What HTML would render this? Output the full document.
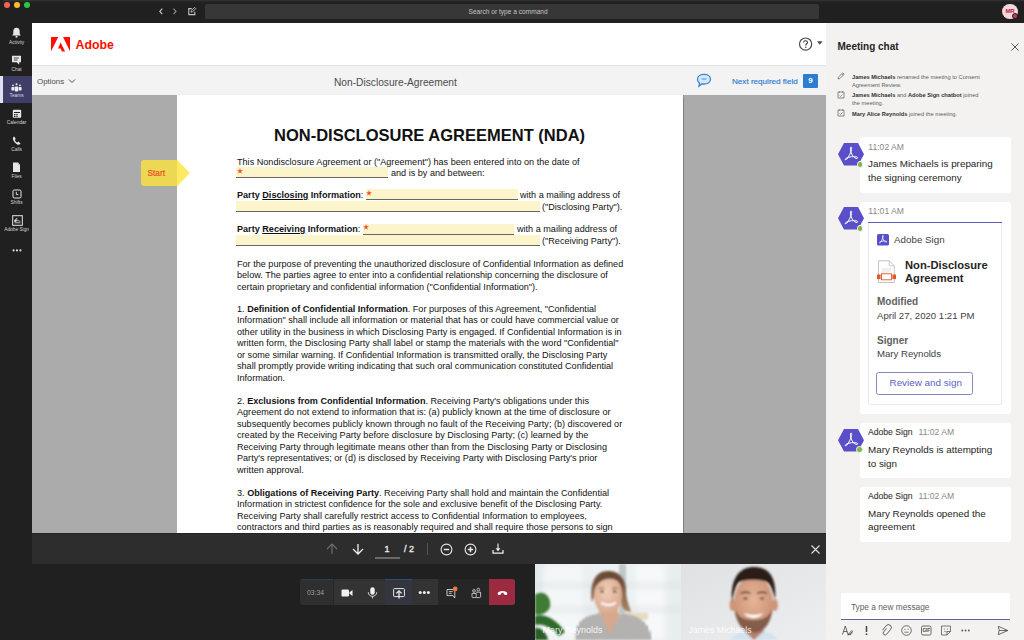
<!DOCTYPE html>
<html><head><meta charset="utf-8">
<style>
*{box-sizing:border-box}
html,body{margin:0;padding:0}
body{width:1024px;height:640px;overflow:hidden;position:relative;background:#202020;font-family:"Liberation Sans",sans-serif}
.a{position:absolute}
.nw{white-space:nowrap}
svg{position:absolute;overflow:visible}
/* rail */
.ri{position:absolute;left:0;width:32px;text-align:center}
.rl{position:absolute;left:0.6px;width:32px;text-align:center;font-size:4.8px;color:#d4d4d4;line-height:5px;white-space:nowrap}
/* doc */
.dl{position:absolute;left:237px;font-size:9.1px;line-height:11px;color:#111;white-space:nowrap;margin-top:1.1px}
.fld{position:absolute;background:#fcf4cb;border-bottom:1px solid #666}
.star{position:absolute;color:#e8412a;font-size:10px;line-height:10px;font-weight:bold}
/* chat */
.card{position:absolute;left:860px;width:151px;background:#fff;border-radius:3px}
.hex{position:absolute;width:26px;height:24px}
.ct{position:absolute;left:868px;font-size:9.85px;color:#252423;white-space:nowrap;line-height:13px}
.tm{position:absolute;font-size:8.6px;color:#8a8886;white-space:nowrap;line-height:10px}
.sys{position:absolute;left:852px;font-size:5.7px;color:#605e5c;line-height:7.7px;white-space:nowrap}
.sys b{color:#323130}
</style></head>
<body>

<!-- ===== TITLE BAR ===== -->
<div class="a" style="left:0;top:0;width:1024px;height:23px;background:#202020"></div>
<div class="a" style="left:3px;top:0;width:1021px;height:1px;background:#303030"></div><div class="a" style="left:3px;top:1px;width:1021px;height:1px;background:#262626"></div>
<div class="a" style="left:4px;top:2px;width:6px;height:6px;border-radius:50%;background:#fe5f57"></div>
<div class="a" style="left:14px;top:2px;width:6px;height:6px;border-radius:50%;background:#febc2e"></div>
<div class="a" style="left:23.5px;top:2px;width:6px;height:6px;border-radius:50%;background:#28c840"></div>
<!-- nav -->
<svg style="left:158px;top:7px" width="6" height="9" viewBox="0 0 6 9"><path d="M4.3 1.6 L1.8 4.4 L4.3 7.2" fill="none" stroke="#c4c4c4" stroke-width="1.15"/></svg>
<svg style="left:172px;top:7px" width="6" height="9" viewBox="0 0 6 9"><path d="M1.5 1.6 L4 4.4 L1.5 7.2" fill="none" stroke="#8e8e8e" stroke-width="1.15"/></svg>
<svg style="left:187px;top:6px" width="10" height="10" viewBox="0 0 10 10"><path d="M4.8 2.6 H1.8 V8.6 H7.8 V5.8" fill="none" stroke="#c4c4c4" stroke-width="1.1"/><path d="M4 6.2 L4.4 4.6 L7.6 1.4 L8.8 2.6 L5.6 5.8 Z" fill="none" stroke="#c4c4c4" stroke-width="0.9"/></svg>
<div class="a" style="left:205px;top:4px;width:614px;height:15px;background:#373737;border-radius:2px"></div>
<div class="a nw" style="left:468.5px;top:7px;font-size:6.6px;line-height:9px;color:#c4c4c4">Search or type a command</div>
<!-- avatar -->
<div class="a" style="left:1002px;top:3.5px;width:15.5px;height:15.5px;border-radius:50%;background:#f4d7dd"></div>
<div class="a nw" style="left:1003px;top:7px;width:14px;text-align:center;font-size:6px;line-height:8px;font-weight:bold;color:#b4243f;letter-spacing:-0.2px">MR</div>
<div class="a" style="left:1011.5px;top:12.6px;width:6.8px;height:6.8px;border-radius:50%;background:#d13650;border:1px solid #202020"></div>

<!-- ===== LEFT RAIL ===== -->
<div class="a" style="left:0;top:23px;width:32px;height:617px;background:#202020"></div>
<div class="a" style="left:0;top:76px;width:32px;height:27px;background:#3e3e67"></div>
<div class="a" style="left:0;top:76px;width:3px;height:27px;background:#e0e0f4"></div>
<!-- activity bell -->
<svg style="left:11px;top:27px" width="11" height="11" viewBox="0 0 11 11"><path d="M5.5 0.8 C3.4 0.8 2.3 2.4 2.3 4.3 V6.8 L1.2 8.6 H9.8 L8.7 6.8 V4.3 C8.7 2.4 7.6 0.8 5.5 0.8 Z" fill="#e6e6e6"/><rect x="4.6" y="8.8" width="1.8" height="1.8" fill="#e6e6e6"/></svg>
<div class="rl" style="top:39.5px">Activity</div>
<!-- chat -->
<svg style="left:11px;top:55px" width="11" height="11" viewBox="0 0 11 11"><path d="M1 0.8 H10 V7.2 H8.2 V9.8 L5.6 7.2 H1 Z" fill="#e6e6e6"/><path d="M2.8 3 H7.8 M2.8 5 H6.5" stroke="#202020" stroke-width="0.8"/></svg>
<div class="rl" style="top:66.5px">Chat</div>
<!-- teams -->
<svg style="left:11px;top:82.5px" width="11" height="10" viewBox="0 0 11 10"><circle cx="5.5" cy="1.3" r="1" fill="#f0f0f0"/><circle cx="2" cy="2.3" r="0.9" fill="#f0f0f0"/><circle cx="9" cy="2.3" r="0.9" fill="#f0f0f0"/><rect x="3.7" y="3.4" width="3.6" height="5" rx="0.8" fill="#f0f0f0"/><rect x="0.4" y="4" width="2.9" height="3.5" rx="0.8" fill="#f0f0f0"/><rect x="7.7" y="4" width="2.9" height="3.5" rx="0.8" fill="#f0f0f0"/></svg>
<div class="rl" style="top:93.2px;color:#d6d6e6">Teams</div>
<!-- calendar -->
<svg style="left:11.5px;top:109px" width="10" height="10" viewBox="0 0 10 10"><rect x="0.8" y="0.8" width="8.4" height="8" rx="1" fill="#e6e6e6"/><rect x="2" y="3" width="6" height="1" fill="#202020"/><rect x="2" y="5" width="1.4" height="1.2" fill="#202020"/><rect x="4.3" y="5" width="1.4" height="1.2" fill="#202020"/><rect x="2" y="6.8" width="1.4" height="1.2" fill="#202020"/><rect x="4.3" y="6.8" width="1.4" height="1.2" fill="#202020"/></svg>
<div class="rl" style="top:120px">Calendar</div>
<!-- calls -->
<svg style="left:12px;top:135.5px" width="9" height="9" viewBox="0 0 9 9"><path d="M1.2 1.2 C1.6 0.7 2.2 0.6 2.6 1 L3.5 2.4 C3.7 2.8 3.6 3.2 3.3 3.5 L2.9 3.9 C3.4 5.2 4.1 6 5.3 6.6 L5.8 6.1 C6.1 5.8 6.5 5.8 6.9 6 L8.1 6.9 C8.5 7.3 8.4 7.9 7.9 8.3 C6.8 9.2 5 8.7 3.3 7 C1.3 5 0.4 2.6 1.2 1.2 Z" fill="#e6e6e6"/></svg>
<div class="rl" style="top:146.7px">Calls</div>
<!-- files -->
<svg style="left:12px;top:162px" width="9" height="11" viewBox="0 0 9 11"><path d="M1 0.5 H5.8 L8 2.8 V10 H1 Z" fill="#e6e6e6"/><path d="M5.8 0.5 V2.8 H8" fill="#bdbdbd"/></svg>
<div class="rl" style="top:173.5px">Files</div>
<!-- shifts -->
<svg style="left:12px;top:188.5px" width="10" height="10" viewBox="0 0 10 10"><rect x="1" y="1" width="8" height="8" rx="1.2" fill="none" stroke="#e6e6e6" stroke-width="1"/><path d="M4.3 2.8 V5.6 H6.4" fill="none" stroke="#e6e6e6" stroke-width="0.9"/></svg>
<div class="rl" style="top:200px">Shifts</div>
<!-- adobe sign -->
<svg style="left:11.5px;top:214.5px" width="11" height="11" viewBox="0 0 11 11"><rect x="0.7" y="0.7" width="9.6" height="9.6" fill="none" stroke="#e6e6e6" stroke-width="1"/><path d="M2.6 7.8 H8.4" stroke="#e6e6e6" stroke-width="0.8"/><path d="M3 6.6 C3.4 4.4 4.4 3.2 4.8 3.2 C5.2 3.2 4.4 5.6 4.8 6 C5.2 6.4 6 5 6.6 5.8 C7 6.3 7.8 6.2 8.3 6" fill="none" stroke="#e6e6e6" stroke-width="0.8"/><rect x="2.4" y="4.8" width="2" height="2" fill="#e6e6e6"/></svg>
<div class="rl" style="top:226.8px">Adobe Sign</div>
<!-- more -->
<svg style="left:12px;top:248px" width="10" height="5" viewBox="0 0 10 5"><circle cx="1.6" cy="2.4" r="1.1" fill="#d8d8d8"/><circle cx="5" cy="2.4" r="1.1" fill="#d8d8d8"/><circle cx="8.4" cy="2.4" r="1.1" fill="#d8d8d8"/></svg>

<!-- ===== MAIN ===== -->
<!-- adobe header -->
<div class="a" style="left:32px;top:23px;width:794px;height:42px;background:#fff"></div>
<div class="a" style="left:32px;top:64.5px;width:794px;height:1px;background:#e3e3e3"></div>
<svg style="left:51px;top:37px" width="19" height="14.5" viewBox="0 0 19 14.5">
  <path d="M0 0 H7.3 L0 14.3 Z" fill="#fa0f00"/>
  <path d="M12 0 H19 V14.3 Z" fill="#fa0f00"/>
  <path d="M9.6 5.6 L14.1 14.5 H10.9 L9.6 11.6 H7 Z" fill="#fa0f00"/>
</svg>
<div class="a nw" style="left:75.5px;top:36.7px;font-size:12.3px;line-height:16px;font-weight:bold;color:#fa0f00">Adobe</div>
<!-- help -->
<svg style="left:798px;top:36px" width="26" height="16" viewBox="0 0 26 16"><circle cx="7.6" cy="8.1" r="6.1" fill="none" stroke="#4a4a4a" stroke-width="1.2"/><path d="M5.6 6.6 C5.6 5.3 6.4 4.7 7.5 4.7 C8.7 4.7 9.5 5.4 9.5 6.4 C9.5 7.6 8 7.8 7.8 9.1 V9.6" fill="none" stroke="#3a3a3a" stroke-width="1.1"/><circle cx="7.8" cy="11.3" r="0.7" fill="#3a3a3a"/><path d="M19 5.2 H24.6 L21.8 8.8 Z" fill="#4a4a4a"/></svg>

<!-- options bar -->
<div class="a" style="left:32px;top:65.5px;width:794px;height:29.5px;background:#f3f3f3"></div>
<div class="a nw" style="left:37px;top:76.7px;font-size:7.9px;line-height:10px;color:#4b4b4b">Options</div>
<svg style="left:68px;top:78px" width="8" height="6" viewBox="0 0 8 6"><path d="M1 1.5 L4 4.5 L7 1.5" fill="none" stroke="#4b4b4b" stroke-width="1"/></svg>
<div class="a nw" style="left:334px;top:75.6px;font-size:10.2px;line-height:13px;color:#4b4b4b">Non-Disclosure-Agreement</div>
<svg style="left:696px;top:73px" width="16" height="15" viewBox="0 0 16 15"><path d="M8 1.3 C11.8 1.3 14.5 3.3 14.5 6.2 C14.5 9 11.8 11 8 11 C7.3 11 6.7 10.9 6.1 10.8 L3 13.2 L3.6 10.2 C2.2 9.3 1.5 7.9 1.5 6.2 C1.5 3.3 4.2 1.3 8 1.3 Z" fill="#d7e7f8" stroke="#3b86d4" stroke-width="1.3"/><path d="M5.5 6 H10.5" stroke="#3b86d4" stroke-width="0.9"/></svg>
<div class="a nw" style="left:732px;top:75.7px;font-size:8.1px;line-height:11px;color:#2a78cc;-webkit-text-stroke:0.15px #2a78cc">Next required field</div>
<div class="a" style="left:803px;top:74px;width:15px;height:14px;background:#2d7dd2;border-radius:1px;color:#fff;font-size:8px;line-height:14px;text-align:center;font-weight:bold">9</div>

<!-- doc viewport -->
<div class="a" style="left:32px;top:95px;width:794px;height:438px;background:#ababab"></div>
<div class="a" style="left:177px;top:95px;width:506px;height:438px;background:#fff;box-shadow:0.5px 0 1px rgba(0,0,0,0.25)"></div>

<!-- doc content -->
<div class="a" style="left:0;top:95px;width:826px;height:438px;overflow:hidden"><div class="a" style="left:0;top:-95px;width:826px;height:640px">

<div class="a nw" style="left:274px;top:124.7px;font-size:16.5px;line-height:20px;font-weight:bold;color:#111">NON-DISCLOSURE AGREEMENT (NDA)</div>
<div class="dl" style="top:155.7px">This Nondisclosure Agreement or ("Agreement") has been entered into on the date of</div>
<div class="fld" style="left:236px;top:167px;width:152px;height:11px"></div>
<div class="dl" style="left:391px;top:166.5px">and is by and between:</div>
<div class="dl" style="top:189.1px"><b>Party <u>Disclosing</u> Information</b>:</div>
<div class="fld" style="left:366px;top:189.3px;width:152px;height:11px"></div>
<div class="dl" style="left:520px;top:189.1px">with a mailing address of</div>
<div class="fld" style="left:236px;top:200.5px;width:304px;height:11.5px"></div>
<div class="dl" style="left:542px;top:200.5px">("Disclosing Party").</div>
<div class="dl" style="top:223.1px"><b>Party <u>Receiving</u> Information</b>:</div>
<div class="fld" style="left:363px;top:223.5px;width:151px;height:11px"></div>
<div class="dl" style="left:517px;top:223.1px">with a mailing address of</div>
<div class="fld" style="left:236px;top:234.5px;width:304px;height:11.5px"></div>
<div class="dl" style="left:542px;top:234.6px">("Receiving Party").</div>
<svg style="left:237px;top:168px" width="6" height="6" viewBox="0 0 10 10"><path d="M5 0 L6.2 3.6 L10 3.6 L6.9 5.8 L8.1 9.5 L5 7.2 L1.9 9.5 L3.1 5.8 L0 3.6 L3.8 3.6 Z" fill="#f04e23"/></svg>
<svg style="left:366px;top:189.5px" width="6" height="6" viewBox="0 0 10 10"><path d="M5 0 L6.2 3.6 L10 3.6 L6.9 5.8 L8.1 9.5 L5 7.2 L1.9 9.5 L3.1 5.8 L0 3.6 L3.8 3.6 Z" fill="#f04e23"/></svg>
<svg style="left:363px;top:223.5px" width="6" height="6" viewBox="0 0 10 10"><path d="M5 0 L6.2 3.6 L10 3.6 L6.9 5.8 L8.1 9.5 L5 7.2 L1.9 9.5 L3.1 5.8 L0 3.6 L3.8 3.6 Z" fill="#f04e23"/></svg>
<div class="dl" style="top:257.5px">For the purpose of preventing the unauthorized disclosure of Confidential Information as defined</div>
<div class="dl" style="top:269.0px">below. The parties agree to enter into a confidential relationship concerning the disclosure of</div>
<div class="dl" style="top:280.5px">certain proprietary and confidential information ("Confidential Information").</div>
<div class="dl" style="top:302.9px">1. <b>Definition of Confidential Information</b>. For purposes of this Agreement, "Confidential</div>
<div class="dl" style="top:314.4px">Information" shall include all information or material that has or could have commercial value or</div>
<div class="dl" style="top:325.9px">other utility in the business in which Disclosing Party is engaged. If Confidential Information is in</div>
<div class="dl" style="top:337.4px">written form, the Disclosing Party shall label or stamp the materials with the word "Confidential"</div>
<div class="dl" style="top:348.9px">or some similar warning. If Confidential Information is transmitted orally, the Disclosing Party</div>
<div class="dl" style="top:360.4px">shall promptly provide writing indicating that such oral communication constituted Confidential</div>
<div class="dl" style="top:371.9px">Information.</div>
<div class="dl" style="top:394.9px">2. <b>Exclusions from Confidential Information</b>. Receiving Party's obligations under this</div>
<div class="dl" style="top:406.4px">Agreement do not extend to information that is: (a) publicly known at the time of disclosure or</div>
<div class="dl" style="top:417.9px">subsequently becomes publicly known through no fault of the Receiving Party; (b) discovered or</div>
<div class="dl" style="top:429.4px">created by the Receiving Party before disclosure by Disclosing Party; (c) learned by the</div>
<div class="dl" style="top:440.9px">Receiving Party through legitimate means other than from the Disclosing Party or Disclosing</div>
<div class="dl" style="top:452.4px">Party's representatives; or (d) is disclosed by Receiving Party with Disclosing Party's prior</div>
<div class="dl" style="top:463.9px">written approval.</div>
<div class="dl" style="top:486.6px">3. <b>Obligations of Receiving Party</b>. Receiving Party shall hold and maintain the Confidential</div>
<div class="dl" style="top:498.1px">Information in strictest confidence for the sole and exclusive benefit of the Disclosing Party.</div>
<div class="dl" style="top:509.6px">Receiving Party shall carefully restrict access to Confidential Information to employees,</div>
<div class="dl" style="top:521.1px">contractors and third parties as is reasonably required and shall require those persons to sign</div>
</div></div>
<!-- start tag -->
<svg style="left:140.5px;top:159.5px" width="50" height="27" viewBox="0 0 50 27"><path d="M3 0 H36.5 L48.8 13 L36.5 26 H3 C1.3 26 0 24.7 0 23 V3 C0 1.3 1.3 0 3 0 Z" fill="#fde33c" fill-opacity="0.8"/></svg>
<div class="a nw" style="left:147.5px;top:168px;font-size:8.3px;line-height:11px;color:#e8502a;-webkit-text-stroke:0.2px #e8502a">Start</div>
<!-- bottom pdf toolbar -->
<div class="a" style="left:32px;top:533px;width:794px;height:31px;background:#2d2d2d"></div>
<div class="a" style="left:32px;top:533px;width:794px;height:1px;background:#242424"></div>
<svg style="left:326px;top:543px" width="12" height="12" viewBox="0 0 12 12"><path d="M6 11 V1.2 M1 6 L6 1 L11 6" fill="none" stroke="#6e6e6e" stroke-width="1.2"/></svg>
<svg style="left:351.5px;top:543px" width="12" height="12" viewBox="0 0 12 12"><path d="M6 1 V10.8 M1 6 L6 11 L11 6" fill="none" stroke="#f0f0f0" stroke-width="1.3"/></svg>
<div class="a nw" style="left:384.6px;top:544px;font-size:9px;line-height:10px;color:#e8e8e8;-webkit-text-stroke:0.35px #e8e8e8">1</div>
<div class="a" style="left:374.5px;top:557px;width:25px;height:1.5px;background:#6a6a6a"></div>
<div class="a nw" style="left:404px;top:544px;font-size:9px;line-height:10px;color:#e8e8e8;-webkit-text-stroke:0.35px #e8e8e8">/ 2</div>
<div class="a" style="left:427px;top:543px;width:1px;height:11.5px;background:#555"></div>
<svg style="left:439.5px;top:542.5px" width="13" height="13" viewBox="0 0 13 13"><circle cx="6.5" cy="6.5" r="5.4" fill="none" stroke="#e8e8e8" stroke-width="1.1"/><path d="M3.8 6.5 H9.2" stroke="#e8e8e8" stroke-width="1.5"/></svg>
<svg style="left:464px;top:542.5px" width="13" height="13" viewBox="0 0 13 13"><circle cx="6.5" cy="6.5" r="5.4" fill="none" stroke="#e8e8e8" stroke-width="1.1"/><path d="M3.8 6.5 H9.2 M6.5 3.8 V9.2" stroke="#e8e8e8" stroke-width="1.5"/></svg>
<svg style="left:492px;top:542.5px" width="12" height="12" viewBox="0 0 12 12"><path d="M6 0.5 V7.5" stroke="#f0f0f0" stroke-width="1.1"/><path d="M3.6 5.2 L6 8.2 L8.4 5.2 Z" fill="#f0f0f0"/><path d="M1 7 V10.2 H11 V7" fill="none" stroke="#f0f0f0" stroke-width="1.2"/></svg>
<svg style="left:810.5px;top:544.5px" width="9" height="9" viewBox="0 0 9 9"><path d="M0.5 0.5 L8.5 8.5 M8.5 0.5 L0.5 8.5" stroke="#e0e0e0" stroke-width="1.1"/></svg>

<!-- call controls -->
<div class="a" style="left:300px;top:579px;width:215px;height:26px;border-radius:3px;overflow:hidden;background:#333">
  <div class="a" style="left:0;top:0;width:33.5px;height:26px;background:#2f2f2f;border-right:1px solid #262626"></div>
  <div class="a" style="left:0;top:0;width:33px;height:1px;background:#22415c"></div>
  <div class="a" style="left:85px;top:0;width:26.5px;height:26px;background:#35353f"></div>
  <div class="a" style="left:85px;top:0;width:26.5px;height:1px;background:#22527e"></div>
  <div class="a" style="left:137.5px;top:0;width:51.5px;height:26px;background:#262626"></div>
  <div class="a" style="left:189px;top:0;width:26px;height:26px;background:#9c2b41"></div>
</div>
<div class="a nw" style="left:307px;top:589px;font-size:6.8px;line-height:8px;color:#9d9d9d">03:34</div>
<svg style="left:340.5px;top:588.5px" width="12" height="8" viewBox="0 0 12 8"><rect x="0.5" y="0.5" width="7.5" height="7" rx="1.3" fill="#f0f0f0"/><path d="M8.5 3.2 L11.5 1 V7 L8.5 4.8 Z" fill="#f0f0f0"/></svg>
<svg style="left:367px;top:586.5px" width="11" height="12" viewBox="0 0 11 12"><rect x="3.3" y="0.3" width="4.4" height="7.4" rx="2.2" fill="#f0f0f0"/><path d="M1.3 5.2 C1.3 7.8 3.2 9.3 5.5 9.3 C7.8 9.3 9.7 7.8 9.7 5.2 M5.5 9.3 V11.5" fill="none" stroke="#e0e0e0" stroke-width="0.9"/></svg>
<svg style="left:392.5px;top:587.5px" width="12" height="11" viewBox="0 0 12 11"><rect x="0.6" y="0.6" width="10.8" height="8" rx="0.8" fill="none" stroke="#e6e6e6" stroke-width="1"/><path d="M6 10.5 V4" stroke="#f0f0f0" stroke-width="1.3"/><path d="M3.4 5.4 L6 2.8 L8.6 5.4" fill="none" stroke="#f0f0f0" stroke-width="1.3"/></svg>
<svg style="left:418px;top:590px" width="13" height="5" viewBox="0 0 13 5"><circle cx="2.2" cy="2.5" r="1.5" fill="#f0f0f0"/><circle cx="6.3" cy="2.5" r="1.5" fill="#f0f0f0"/><circle cx="10.4" cy="2.5" r="1.5" fill="#f0f0f0"/></svg>
<svg style="left:445.5px;top:587.5px" width="12" height="11" viewBox="0 0 12 11"><path d="M1 1.5 H8.8 V7.6 V10 L7 7.6 H1 Z" fill="none" stroke="#d8d8d8" stroke-width="0.9"/><path d="M2.8 3.6 H6.8 M2.8 5.4 H5.6" stroke="#d8d8d8" stroke-width="0.8"/><circle cx="9.2" cy="0.9" r="2.3" fill="#f2773a"/></svg>
<svg style="left:470.5px;top:587.5px" width="11" height="11" viewBox="0 0 11 11"><circle cx="3" cy="2.9" r="1.35" fill="none" stroke="#d8d8d8" stroke-width="0.85"/><circle cx="7.3" cy="1.6" r="1.35" fill="none" stroke="#d8d8d8" stroke-width="0.85"/><path d="M1 5.4 H5.2 V8.6 C5.2 9.2 4.8 9.6 4.2 9.6 H2 C1.4 9.6 1 9.2 1 8.6 Z" fill="none" stroke="#d8d8d8" stroke-width="0.85"/><path d="M5.2 4.2 H9.6 V8.6 C9.6 9.2 9.2 9.6 8.6 9.6 H5.2" fill="none" stroke="#d8d8d8" stroke-width="0.85"/></svg>
<svg style="left:496.5px;top:589.5px" width="11" height="6" viewBox="0 0 11 6"><path d="M0.8 4.2 C0.6 3.2 1 2.4 2 1.8 C4.3 0.6 6.7 0.6 9 1.8 C10 2.4 10.4 3.2 10.2 4.2 C10 4.9 9.4 5 8.8 4.9 L7.3 4.6 C6.8 4.5 6.7 4.2 6.7 3.8 V3 C5.9 2.7 5.1 2.7 4.3 3 V3.8 C4.3 4.2 4.2 4.5 3.7 4.6 L2.2 4.9 C1.6 5 1 4.9 0.8 4.2 Z" fill="#fff"/></svg>

<!-- videos -->
<svg style="left:535px;top:564px;overflow:hidden" width="146" height="76" viewBox="0 0 146 76">
  <defs>
    <filter id="bl1" x="-30%" y="-30%" width="160%" height="160%"><feGaussianBlur stdDeviation="0.8"/></filter>
    <filter id="bl2" x="-30%" y="-30%" width="160%" height="160%"><feGaussianBlur stdDeviation="3"/></filter>
    <pattern id="stripes" width="3" height="6" patternUnits="userSpaceOnUse"><rect width="3" height="6" fill="#efeeec"/><rect width="1.3" height="6" fill="#2f2b29"/></pattern>
    <linearGradient id="win" x1="0" x2="1"><stop offset="0" stop-color="#e2e9eb"/><stop offset="0.5" stop-color="#eef2f3"/><stop offset="1" stop-color="#e8edef"/></linearGradient>
    <radialGradient id="skinW" cx="0.45" cy="0.42" r="0.62"><stop offset="0" stop-color="#f0cdb6"/><stop offset="1" stop-color="#d7a78c"/></radialGradient>
    <linearGradient id="hairW" x1="0" x2="0" y1="0" y2="1"><stop offset="0" stop-color="#6a4b39"/><stop offset="1" stop-color="#a98160"/></linearGradient>
  </defs>
  <rect width="146" height="76" fill="url(#win)"/>
  <g filter="url(#bl2)">
    <rect x="8" y="0" width="40" height="76" fill="#f4f7f8"/>
    <rect x="100" y="0" width="30" height="76" fill="#f6f8f9"/>
    <rect x="0" y="20" width="146" height="2.5" fill="#d5dcdf"/>
    <rect x="0" y="44" width="146" height="2.5" fill="#d5dcdf"/>
  </g>
  <rect x="84" y="0" width="7" height="50" fill="#c0c8ca" filter="url(#bl1)"/>
  <g filter="url(#bl1)">
    <path d="M0 31 C7 25 17 31 15 43 C12 50 4 52 0 50 Z" fill="#3f7c35"/>
    <path d="M0 52 C10 49 22 56 30 68 L24 72 C16 63 7 59 0 61 Z" fill="#2f6a2b"/>
    <path d="M0 64 C7 63 12 70 13 76 H0 Z" fill="#2b5c27"/>
    <rect x="88" y="48.5" width="25" height="7.5" rx="2" fill="#e6dcc2"/>
    <path d="M57 38 C54 20 60 7 73 7 C86 7 92 17 91 30 C92 38 95 44 96 48 C92 48 88 45 87 42 L85 28 C80 18 66 18 61 28 Z" fill="url(#hairW)"/>
    <rect x="64" y="43" width="19" height="14" fill="#d9a98e"/>
    <ellipse cx="73" cy="31" rx="14" ry="20" fill="url(#skinW)"/>
    <path d="M59 27 C60 13 67 9 74 9 C83 9 88 15 89 25 C85 17 79 14 72 15 C66 16 61 20 59 27 Z" fill="#6a4b39"/>
    <path d="M66 38 C70 42 77 42 81 38" stroke="#fff" stroke-width="1.8" fill="none"/>
    <path d="M66 37.5 C70 39 77 39 81 37.5" stroke="#c98a78" stroke-width="0.6" fill="none"/>
    <path d="M63.5 24.5 C65 23.5 68 23.5 69.5 24.5 M77 24.5 C78.5 23.5 81.5 23.5 83 24.5" stroke="#5b4032" stroke-width="0.8" fill="none"/>
    <ellipse cx="67" cy="27.5" rx="2" ry="0.9" fill="#3a2b24"/>
    <ellipse cx="79.5" cy="27.5" rx="2" ry="0.9" fill="#3a2b24"/>
  </g>
  <path d="M40 76 C40 62 45 54 57 51 L66 49 C68 57 79 60 86 49 L96 51 C108 54 116 62 116 76 Z" fill="url(#stripes)" filter="url(#bl1)"/>
  <path d="M65 49.5 L75 70 L86 49.5 Z" fill="#d6a88d" filter="url(#bl1)"/>
  <text x="7.5" y="68.5" font-family="Liberation Sans" font-size="9" fill="#fff" fill-opacity="0.88">Mary Reynolds</text>
</svg>
<svg style="left:681px;top:564px;overflow:hidden" width="145" height="76" viewBox="0 0 145 76">
  <defs>
    <linearGradient id="bgm" x1="0" x2="1" y1="0" y2="1"><stop offset="0" stop-color="#dfe1e3"/><stop offset="1" stop-color="#eceef0"/></linearGradient>
    <filter id="bl3" x="-30%" y="-30%" width="160%" height="160%"><feGaussianBlur stdDeviation="0.8"/></filter>
    <radialGradient id="skinM" cx="0.5" cy="0.42" r="0.6"><stop offset="0" stop-color="#e6b497"/><stop offset="1" stop-color="#c98f73"/></radialGradient>
  </defs>
  <rect width="145" height="76" fill="url(#bgm)"/>
  <g filter="url(#bl3)">
    <path d="M50 76 C52 71 58 68 66 67 H80 C88 68 94 71 96 76 Z" fill="#d3e2f0"/>
    <path d="M62 66 L73 76 L84 66 Z" fill="#b98067"/>
    <ellipse cx="51.5" cy="41" rx="3" ry="6" fill="#cf9477"/>
    <ellipse cx="94" cy="41" rx="3" ry="6" fill="#cf9477"/>
    <ellipse cx="72.5" cy="40" rx="19.5" ry="28.5" fill="url(#skinM)"/>
    <path d="M51 38 C49 15 58 3 73 3 C88 3 96 13 94 36 C92 27 90 21 86 18 C78 15 66 15 58 18 C54 22 53 30 51 38 Z" fill="#2a1e18"/>
    <path d="M53.5 44 C55 60 62 68.5 72.5 68.5 C83 68.5 90 60 91.5 44 C89 51 85 56 72.5 56 C60 56 56 51 53.5 44 Z" fill="#6a4a3a" opacity="0.75"/>
    <path d="M63 49 C67 55.5 78 55.5 82 49 C77 51.5 68 51.5 63 49 Z" fill="#fff"/>
    <path d="M59.5 29.5 C62.5 28 66.5 28 69.5 29.5 M76 29.5 C79 28 83 28 86 29.5" stroke="#3a2a22" stroke-width="1.3" fill="none"/>
    <ellipse cx="64.5" cy="34.5" rx="2.3" ry="1" fill="#4a3a30"/>
    <ellipse cx="81" cy="34.5" rx="2.3" ry="1" fill="#4a3a30"/>
  </g>
  <text x="7.5" y="68.5" font-family="Liberation Sans" font-size="8.8" fill="#fff" fill-opacity="0.88">James Michaels</text>
</svg>

<!-- ===== CHAT PANEL ===== -->
<div class="a" style="left:826px;top:23px;width:198px;height:617px;background:#f3f2f1"></div>
<div class="a nw" style="left:837.5px;top:41.2px;font-size:10px;line-height:12px;font-weight:bold;color:#252423">Meeting chat</div>
<svg style="left:1010.5px;top:42.5px" width="8" height="8" viewBox="0 0 8 8"><path d="M0.4 0.4 L7.6 7.6 M7.6 0.4 L0.4 7.6" stroke="#444" stroke-width="0.9"/></svg>

<!-- system messages -->
<svg style="left:836.5px;top:71.5px" width="8" height="8" viewBox="0 0 8 8"><path d="M1 7 L1.4 5.2 L5.8 0.8 L7.2 2.2 L2.8 6.6 Z M4.8 1.8 L6.2 3.2" fill="none" stroke="#605e5c" stroke-width="0.7"/></svg>
<div class="sys" style="top:73.8px"><b>James Michaels</b> renamed the meeting to Consent</div>
<div class="sys" style="top:81.6px">Agreement Review.</div>
<svg style="left:836.5px;top:90.5px" width="8" height="8" viewBox="0 0 8 8"><path d="M5.5 1 H7 V7 H1 V1 H2.5 M3 1 H5" fill="none" stroke="#605e5c" stroke-width="0.7"/><path d="M2.5 0.2 V2 M5.5 0.2 V2" stroke="#605e5c" stroke-width="0.6"/><path d="M2.5 4.5 L3.5 5.5 L5.5 3.5" fill="none" stroke="#605e5c" stroke-width="0.6"/></svg>
<div class="sys" style="top:92.2px"><b>James Michaels</b> and <b>Adobe Sign chatbot</b> joined</div>
<div class="sys" style="top:99.9px">the meeting.</div>
<svg style="left:836.5px;top:109px" width="8" height="8" viewBox="0 0 8 8"><path d="M5.5 1 H7 V7 H1 V1 H2.5 M3 1 H5" fill="none" stroke="#605e5c" stroke-width="0.7"/><path d="M2.5 0.2 V2 M5.5 0.2 V2" stroke="#605e5c" stroke-width="0.6"/><path d="M2.5 4.5 L3.5 5.5 L5.5 3.5" fill="none" stroke="#605e5c" stroke-width="0.6"/></svg>
<div class="sys" style="top:110.6px"><b>Mary Alice Reynolds</b> joined the meeting.</div>

<!-- card 1 -->
<div class="card" style="top:137px;height:56px"></div>
<svg style="left:838px;top:143px" width="26" height="22.5" viewBox="0 0 26 22.5"><path d="M6 0 H20 L26 11.25 L20 22.5 H6 L0 11.25 Z" fill="#5b4fc9"/><g transform="translate(13.3,11.6) scale(1.05)" fill="none" stroke="#fff" stroke-width="0.95"><path d="M-0.2 -7.2 C-1.2 -7.2 -1 -4.5 0 -1.5 C1 1 2.5 3 4.5 3.6 C6.2 4 6.8 2.8 5 2.2 C2.5 1.5 -2.5 2 -5 3.6 C-6.5 4.6 -5.6 5.5 -4.4 4.4 C-2.4 2.5 -0.5 -1.8 0.2 -4.8 C0.5 -6.4 0.4 -7.2 -0.2 -7.2 Z"/></g></svg>
<div class="a" style="left:856.8px;top:161px;width:6.6px;height:6.6px;border-radius:50%;background:#7bb84a;border:1px solid #f3f2f1"></div>
<div class="tm" style="left:868.3px;top:141.5px">11:02 AM</div>
<div class="ct" style="top:157.3px">James Michaels is preparing</div>
<div class="ct" style="top:171px">the signing ceremony</div>

<!-- card 2 -->
<div class="card" style="top:202px;height:211.5px"></div>
<svg style="left:838px;top:207.2px" width="26" height="22.5" viewBox="0 0 26 22.5"><path d="M6 0 H20 L26 11.25 L20 22.5 H6 L0 11.25 Z" fill="#5b4fc9"/><g transform="translate(13.3,11.6) scale(1.05)" fill="none" stroke="#fff" stroke-width="0.95"><path d="M-0.2 -7.2 C-1.2 -7.2 -1 -4.5 0 -1.5 C1 1 2.5 3 4.5 3.6 C6.2 4 6.8 2.8 5 2.2 C2.5 1.5 -2.5 2 -5 3.6 C-6.5 4.6 -5.6 5.5 -4.4 4.4 C-2.4 2.5 -0.5 -1.8 0.2 -4.8 C0.5 -6.4 0.4 -7.2 -0.2 -7.2 Z"/></g></svg>
<div class="a" style="left:856.8px;top:225px;width:6.6px;height:6.6px;border-radius:50%;background:#7bb84a;border:1px solid #f3f2f1"></div>
<div class="tm" style="left:868.3px;top:205.8px">11:01 AM</div>
<div class="a" style="left:868px;top:222px;width:134px;height:183px;border:1px solid #ebebeb;border-top:none;border-radius:0 0 3px 3px"></div>
<div class="a" style="left:868px;top:221.8px;width:134px;height:1.3px;background:#5b5fc7"></div>
<svg style="left:877px;top:234px" width="12" height="12" viewBox="0 0 12 12"><rect x="0" y="0" width="12" height="11.5" rx="1.6" fill="#5b4fc9"/><g transform="translate(6,5.8) scale(0.62)" fill="none" stroke="#fff" stroke-width="1.2"><path d="M-0.2 -7.2 C-1.2 -7.2 -1 -4.5 0 -1.5 C1 1 2.5 3 4.5 3.6 C6.2 4 6.8 2.8 5 2.2 C2.5 1.5 -2.5 2 -5 3.6 C-6.5 4.6 -5.6 5.5 -4.4 4.4 C-2.4 2.5 -0.5 -1.8 0.2 -4.8 C0.5 -6.4 0.4 -7.2 -0.2 -7.2 Z"/></g></svg>
<div class="a nw" style="left:894px;top:234px;font-size:9.8px;line-height:12px;color:#424242">Adobe Sign</div>
<svg style="left:877px;top:260px" width="19" height="24" viewBox="0 0 19 24"><path d="M1.5 0.8 H12.2 L17.3 5.8 V22.5 H1.5 Z" fill="#fff" stroke="#bdbdbd" stroke-width="0.9"/><path d="M12.2 0.8 V5.8 H17.3" fill="none" stroke="#bdbdbd" stroke-width="0.8"/><path d="M4.5 9 H14 M4.5 11 H14 M4.5 13 H11" stroke="#d4d4d4" stroke-width="0.7"/><rect x="0" y="14.5" width="3.6" height="4.6" fill="#e0582c"/><rect x="15.4" y="14.5" width="3.6" height="4.6" fill="#e0582c"/><rect x="4.5" y="13.8" width="10" height="6" fill="#fff" stroke="#e0582c" stroke-width="0.9"/></svg>
<div class="a nw" style="left:905px;top:259px;font-size:11.2px;line-height:13px;font-weight:bold;color:#252423">Non-Disclosure</div>
<div class="a nw" style="left:905px;top:272px;font-size:11.2px;line-height:13px;font-weight:bold;color:#252423">Agreement</div>
<div class="a nw" style="left:877px;top:296px;font-size:10px;line-height:12px;font-weight:bold;color:#616161">Modified</div>
<div class="a nw" style="left:877px;top:309.5px;font-size:9.6px;line-height:12px;color:#424242">April 27, 2020 1:21 PM</div>
<div class="a nw" style="left:877px;top:334.5px;font-size:10px;line-height:12px;font-weight:bold;color:#616161">Signer</div>
<div class="a nw" style="left:877px;top:348px;font-size:9.6px;line-height:12px;color:#424242">Mary Reynolds</div>
<div class="a" style="left:876.3px;top:371.5px;width:97px;height:23.3px;border:1px solid #8587c4;border-radius:2.5px;background:#fff"></div>
<div class="a nw" style="left:889.5px;top:376.5px;font-size:9.9px;line-height:12px;color:#5b5fc7">Review and sign</div>

<!-- card 3 -->
<div class="card" style="top:423px;height:55px"></div>
<svg style="left:838px;top:429px" width="26" height="22.5" viewBox="0 0 26 22.5"><path d="M6 0 H20 L26 11.25 L20 22.5 H6 L0 11.25 Z" fill="#5b4fc9"/><g transform="translate(13.3,11.6) scale(1.05)" fill="none" stroke="#fff" stroke-width="0.95"><path d="M-0.2 -7.2 C-1.2 -7.2 -1 -4.5 0 -1.5 C1 1 2.5 3 4.5 3.6 C6.2 4 6.8 2.8 5 2.2 C2.5 1.5 -2.5 2 -5 3.6 C-6.5 4.6 -5.6 5.5 -4.4 4.4 C-2.4 2.5 -0.5 -1.8 0.2 -4.8 C0.5 -6.4 0.4 -7.2 -0.2 -7.2 Z"/></g></svg>
<div class="a" style="left:856.3px;top:446.3px;width:6.6px;height:6.6px;border-radius:50%;background:#7bb84a;border:1px solid #f3f2f1"></div>
<div class="tm" style="left:868px;top:427.3px;color:#3b3a39;font-size:8.6px;-webkit-text-stroke:0.12px #3b3a39">Adobe Sign</div>
<div class="tm" style="left:918.5px;top:427.3px">11:02 AM</div>
<div class="ct" style="top:442.8px">Mary Reynolds is attempting</div>
<div class="ct" style="top:456.8px">to sign</div>

<!-- card 4 -->
<div class="card" style="top:487px;height:55px"></div>
<div class="tm" style="left:868px;top:491.3px;color:#3b3a39;font-size:8.6px;-webkit-text-stroke:0.12px #3b3a39">Adobe Sign</div>
<div class="tm" style="left:918.5px;top:491.3px">11:02 AM</div>
<div class="ct" style="top:506.8px">Mary Reynolds opened the</div>
<div class="ct" style="top:520.2px">agreement</div>

<!-- compose -->
<div class="a" style="left:841px;top:593px;width:168.5px;height:27px;background:#fff;border-radius:2px 2px 0 0;border-bottom:1.5px solid #6264a7"></div>
<div class="a nw" style="left:851px;top:601.5px;font-size:8.3px;line-height:11px;color:#616161">Type a new message</div>
<!-- compose icons -->
<svg style="left:840px;top:624px" width="180" height="13" viewBox="0 0 180 13">
  <g fill="none" stroke="#484848" stroke-width="0.8">
    <path d="M2.5 10.5 L5.3 2 L8 10.5 M3.5 7.5 H7.2"/>
    <path d="M7.5 11 C8.5 10 9.5 9.5 10 10.5 C10.5 11.5 12 9 12.5 8.5"/>
    <path d="M11.8 6.5 L8.5 10 L8.3 11 L9.3 10.8 L12.6 7.3 Z"/>
  </g>
  <path d="M26.5 2 V8" stroke="#444" stroke-width="1.5"/><circle cx="26.5" cy="10.2" r="0.9" fill="#444"/>
  <g transform="translate(46.8,6.6) rotate(40)"><path d="M-1.6 -1.5 V3 A1.9 1.9 0 0 0 2.2 3 V-3.4 A2.9 2.9 0 0 0 -3.6 -3.4 V2.6" fill="none" stroke="#484848" stroke-width="0.8"/></g>
  <circle cx="66.5" cy="6.5" r="4.8" fill="none" stroke="#484848" stroke-width="0.8"/><path d="M64.9 4.8 V6 M68.1 4.8 V6" stroke="#484848" stroke-width="0.7"/><path d="M64.4 8.2 H68.6" fill="none" stroke="#484848" stroke-width="0.7"/>
  <rect x="81.5" y="2" width="9.5" height="9" rx="1.5" fill="none" stroke="#484848" stroke-width="0.8"/><text x="86.3" y="8.4" font-size="4.6" font-family="Liberation Sans" font-weight="bold" text-anchor="middle" fill="#484848" letter-spacing="-0.1">GIF</text>
  <path d="M101.5 2 H110.5 V7.5 L107 11 H101.5 Z M107 11 V7.5 H110.5" fill="none" stroke="#555" stroke-width="0.8"/><circle cx="104.3" cy="5" r="0.5" fill="#555"/><circle cx="107.5" cy="5" r="0.5" fill="#555"/><path d="M104 7 C104.8 7.8 106 7.8 106.6 7.4" fill="none" stroke="#555" stroke-width="0.6"/>
  <circle cx="122.3" cy="6.5" r="0.9" fill="#555"/><circle cx="125.6" cy="6.5" r="0.9" fill="#555"/><circle cx="128.9" cy="6.5" r="0.9" fill="#555"/>
  <path d="M158.3 2.3 L167.8 6.5 L158.3 10.7 L159.2 6.5 Z M159.2 6.5 H167.8" fill="none" stroke="#484848" stroke-width="0.8"/>
</svg>

</body></html>
